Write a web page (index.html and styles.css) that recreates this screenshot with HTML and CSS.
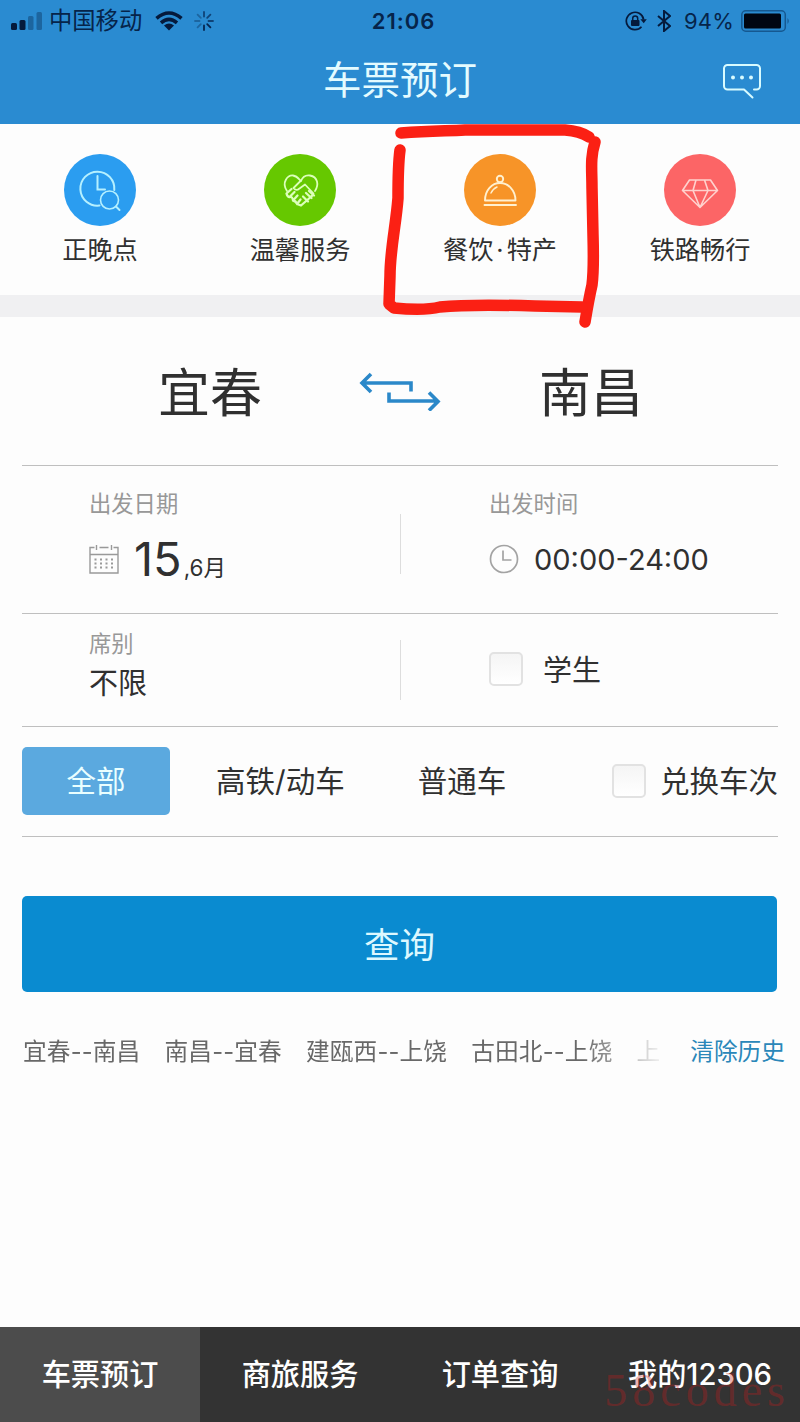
FILE: index.html
```html
<!DOCTYPE html>
<html lang="zh-CN">
<head>
    <meta charset="UTF-8">
    <meta name="viewport" content="width=device-width, initial-scale=1.0">
    <title>车票预订</title>
    <link rel="stylesheet" href="styles.css">
</head>
<body>
    <header>
        <div class="status-bar">
            <div class="status-left">
                <svg width="32" height="20" viewBox="0 0 32 20">
                    <g fill="#051a3c">
                        <rect x="0" y="12" width="6" height="7" rx="1.5"/>
                        <rect x="8.5" y="9" width="6" height="10" rx="1.5"/>
                    </g>
                    <g fill="#1c659f">
                        <rect x="17" y="5" width="5.500" height="14" rx="1.500"/>
                        <rect x="25.500" y="1" width="5.500" height="18" rx="1.500"/>
                    </g>
                </svg>
                <span class="carrier">中国移动</span>
                <svg class="wifi" width="28" height="20" viewBox="0 0 28 20">
                    <g fill="none" stroke="#051a3c" stroke-width="3.600">
                        <path d="M1.500 7.300Q14 -3.300 26.500 7.300"/>
                        <path d="M6 11.800Q14 5 22 11.800"/>
                    </g>
                    <path d="M9 14.600Q14 10.600 19 14.600L14 19.600Z" fill="#051a3c"/>
                </svg>
                <svg width="20" height="20" viewBox="0 0 20 20">
                    <g fill="none" stroke="#0f4377" stroke-width="1.800" stroke-linecap="round">
                        <path d="M10 1v4.500M16.400 3.600l-3.200 3.200M19 10h-4.500" />
                        <path d="M16.400 16.400l-3.200-3.200M10 19v-4.500" stroke="#06254f"/>
                        <path d="M3.600 16.400l3.200-3.200M1 10h4.500M3.600 3.600l3.200 3.200" stroke="#1c659f"/>
                    </g>
                </svg>
            </div>
            <div class="time">21:06</div>
            <div class="status-right">
                <svg width="22" height="20" viewBox="0 0 22 20">
                    <path d="M16.500 15.800A8.700 8.700 0 1 1 18.600 8.500" fill="none" stroke="#051a3c" stroke-width="1.700"/>
                    <path d="M15.400 8.300h6.400l-3.100 4z" fill="#051a3c"/>
                    <rect x="6" y="9" width="8.500" height="6" rx="1" fill="#051a3c"/>
                    <path d="M7.700 9.500V7.400a2.500 2.500 0 0 1 5 0v2.100" fill="none" stroke="#051a3c" stroke-width="1.500"/>
                </svg>
                <svg class="bluetooth" width="14" height="22" viewBox="0 0 14 22">
                    <path d="M1 6l12 10-6 5V1l6 5L1 16" fill="none" stroke="#051a3c" stroke-width="2"/>
                </svg>
                <span class="percent">94%</span>
                <svg width="49" height="22" viewBox="0 0 49 22">
                    <rect x=".8" y=".8" width="43.500" height="20.400" rx="4" fill="none" stroke="#155890" stroke-width="1.500"/>
                    <rect x="3" y="3.500" width="37" height="15" rx="1.500" fill="#000612"/>
                    <path d="M46.500 8q2.500 3 0 6z" fill="#155890"/>
                </svg>
            </div>
        </div>
        <div class="title-bar">
            <h1>车票预订</h1>
            <svg class="message" width="40" height="36" viewBox="0 0 40 36">
                <path d="M32 26.500h2.500a3.500 3.500 0 0 0 3.500-3.500V5.500A3.500 3.500 0 0 0 34.500 2h-29A3.500 3.500 0 0 0 2 5.500V23a3.500 3.500 0 0 0 3.500 3.500H22l8.500 8" fill="none" stroke="#d8fbff" stroke-width="2" stroke-linecap="round" stroke-linejoin="round"/>
                <g fill="#d8fbff"><circle cx="11" cy="14.500" r="2"/><circle cx="20" cy="14.500" r="2"/><circle cx="29" cy="14.500" r="2"/></g>
            </svg>
        </div>
    </header>

    <nav class="services">
        <a class="service">
            <span class="service-icon blue">
                <svg width="72" height="72" viewBox="0 0 72 72" fill="none" stroke="#b5f0ff" stroke-width="2" stroke-linecap="round">
                    <path d="M50.300 36A17 17 0 1 0 35.500 51.500M33.500 22v13.500h7.500"/>
                    <circle cx="45.500" cy="46" r="9" stroke-width="1.600"/>
                    <path d="M52 52.500l3.500 3.500"/>
                </svg>
            </span>
            <span>正晚点</span>
        </a>
        <a class="service">
            <span class="service-icon green">
                <svg width="72" height="72" viewBox="0 0 72 72" fill="none" stroke="#dcffba" stroke-width="1.800" stroke-linecap="round" stroke-linejoin="round">
                    <path d="M23 37C17 28 24 21 29 21.500C34 22 36 27 37 27C39 22 43 21 46 21.500C54 23 55 31 51 37"/>
                    <path d="M37 26.500l-7.500 7.500q2.500 3.500 6 .5l5.500-4 8.500 9-2.500 3"/>
                    <path d="M22.500 39.500l5-4.500M25.500 43l5-5M29 46.500l4.500-5M33 50l3.500-4.500M22.500 39.500q1 4 3.500 3.500t3 3.500q3 .5 4 3.500l4 1.500 12-10.500M42 39l5.500 5M39 42.500l5 5M45 37l5 4.500" stroke-width="2.300"/>
                </svg>
            </span>
            <span>温馨服务</span>
        </a>
        <a class="service">
            <span class="service-icon orange">
                <svg width="72" height="72" viewBox="0 0 72 72" fill="none" stroke="#fff0cf" stroke-width="1.900" stroke-linecap="round" stroke-linejoin="round">
                    <circle cx="36" cy="25" r="3.200"/>
                    <path d="M21 46.500C21 36 28 29 36 29S51.500 36 51.500 46.500ZM20.500 51h31.500"/>
                    <path d="M27 39q2.200-4.500 6-6" stroke-width="1.500"/>
                </svg>
            </span>
            <span>餐饮<i class="dot">·</i>特产</span>
        </a>
        <a class="service">
            <span class="service-icon red">
                <svg width="72" height="72" viewBox="0 0 72 72" fill="none" stroke="#ffd2ce" stroke-width="1.600" stroke-linejoin="round">
                    <path d="M25.500 26h21l7 10.500L36 53.500 18.500 36.500ZM18.500 36.500h35M32 26l-3 10.500L36 53.500l8-17L40.500 26"/>
                </svg>
            </span>
            <span>铁路畅行</span>
        </a>
        <!-- red pen mark around the catering entry -->
        <svg class="pen-mark" width="230" height="220" viewBox="375 115 230 220" fill="none" stroke="#fb2014" stroke-width="11.500" stroke-linecap="round" stroke-linejoin="round">
            <path d="M401 133C430 131 445 131 465 130H565Q580 131 589 137"/>
            <path d="M595 142C590 158 592 170 592 188L593 235Q594 270 592 285Q589 298 585 322"/>
            <path d="M400 150C398 165 398 180 398 198C396 225 390 250 390 276L389 304L394 308Q424 311 440 307Q470 304 535 306L582 307"/>
        </svg>
    </nav>

    <main>
        <section class="stations">
            <span>宜春</span>
            <svg width="82" height="40" viewBox="0 0 82 40" fill="none" stroke="#2b88c9" stroke-width="3.600">
                <path d="M52 20.500v-8.500H3M12 3L3 12l9 9"/>
                <path d="M30 21.500v8.500h49M70 21.500l9 9-9 9"/>
            </svg>
            <span>南昌</span>
        </section>

        <section class="row row-date">
            <div class="cell">
                <p class="label">出发日期</p>
                <div class="value">
                    <svg width="30" height="30" viewBox="0 0 30 30" fill="none" stroke="#999" stroke-width="1.400">
                        <path d="M5.500 3.500H1V29h28V3.500h-4.500M10.500 3.500h9M1 10.500h28"/>
                        <path d="M7.500 1v5M22.500 1v5"/>
                        <path d="M5.500 15.500h19M5.500 19.500h19M5.500 23.500h19" stroke-dasharray="2 3.500" stroke-width="2"/>
                    </svg>
                    <span class="date"><b>15</b>,6月</span>
                </div>
            </div>
            <div class="cell">
                <p class="label">出发时间</p>
                <div class="value">
                    <svg width="30" height="30" viewBox="0 0 30 30" fill="none" stroke="#a3a3a3" stroke-width="1.700">
                        <circle cx="15" cy="15" r="13.500"/>
                        <path d="M14 6.500V16h8.500"/>
                    </svg>
                    <span class="hours">00:00-24:00</span>
                </div>
            </div>
        </section>

        <section class="row row-seat">
            <div class="cell">
                <p class="label">席别</p>
                <p class="seat">不限</p>
            </div>
            <label class="cell check">
                <input type="checkbox">
                <span>学生</span>
            </label>
        </section>

        <section class="row row-type">
            <button class="type active">全部</button>
            <span class="type fast">高铁/动车</span>
            <span class="type">普通车</span>
            <label class="check exchange">
                <input type="checkbox">
                <span>兑换车次</span>
            </label>
        </section>

        <button class="search">查询</button>

        <section class="history">
            <div class="history-list">
                <span>宜春--南昌</span>
                <span>南昌--宜春</span>
                <span>建瓯西--上饶</span>
                <span>古田北--上饶</span>
                <span>上</span>
            </div>
            <a class="clear">清除历史</a>
        </section>
    </main>

    <footer class="tabs">
        <a class="tab active">车票预订</a>
        <a class="tab">商旅服务</a>
        <a class="tab">订单查询</a>
        <a class="tab">我的12306</a>
        <span class="watermark">58codes</span>
    </footer>
</body>
</html>
```
FILE: styles.css
```css
* {
    box-sizing: border-box;
    margin: 0;
    padding: 0;
}

body {
    width: 800px;
    height: 1422px;
    display: flex;
    flex-direction: column;
    overflow: hidden;
    background: #fdfdfd;
    color: #303030;
    font-family: Inter, "Noto Sans CJK SC", sans-serif;
}

svg {
    display: block;
    flex-shrink: 0;
}

header {
    height: 124px;
    background: #2a8bd1;
}

.status-bar {
    height: 40px;
    padding: 0 10px 0 11px;
    display: grid;
    grid-template-columns: 1fr auto 1fr;
    align-items: center;
    color: #06244a;
    font-size: 22px;
    line-height: 40px;
}

.status-left, .status-right {
    display: flex;
    align-items: center;
}

.status-right {
    justify-content: flex-end;
}

.carrier {
    margin-left: 6px;
    font-size: 23.300px;
    line-height: 42px;
}

.wifi {
    margin: 0 11px 0 13px;
}

.time {
    padding-left: 6px;
    font-weight: 600;
    letter-spacing: 1px;
}

.bluetooth {
    margin: 0 13px 0 10px;
}

.percent {
    margin-right: 7px;
    letter-spacing: .2px;
}

.title-bar {
    height: 80px;
    display: flex;
    align-items: center;
    justify-content: center;
    position: relative;
    color: #e4fbff;
}

.title-bar h1 {
    font-size: 38.500px;
    font-weight: 400;
    line-height: 80px;
}

.message {
    position: absolute;
    right: 38px;
    top: 23px;
}

.services {
    position: relative;
    height: 193px;
    padding-top: 30px;
    display: grid;
    grid-template-columns: repeat(4, 1fr);
    border-bottom: 22px solid #f0f0f2;
}

.service {
    display: flex;
    flex-direction: column;
    align-items: center;
    gap: 6px;
    font-size: 25.200px;
    line-height: 36px;
}

.service-icon {
    width: 72px;
    height: 72px;
    border-radius: 50%;
}

.dot {
    padding: 0 3px;
    font-style: normal;
}

.blue { background: #2b9df0; }
.green { background: #66c800; }
.orange { background: #f79428; }
.red { background: #fc6566; }

.pen-mark {
    position: absolute;
    left: 375px;
    top: -9px;
}

main {
    flex: 1;
    padding: 0 22px;
}

.stations {
    height: 149px;
    display: flex;
    align-items: center;
    justify-content: center;
    gap: 98px;
    border-bottom: 1px solid #bfbfbf;
    font-size: 52px;
    line-height: 148px;
}

.stations span {
    padding-top: 6px;
    margin-right: -1px;
}

.row {
    display: flex;
    border-bottom: 1px solid #bfbfbf;
}

.cell {
    width: 50%;
    padding-left: 67px;
}

.row .cell + .cell {
    padding-left: 89px;
}

.row-date, .row-seat {
    background: linear-gradient(#ddd, #ddd) center / 1px 60px no-repeat;
}

.label {
    color: #989898;
    font-size: 22.300px;
    line-height: 30px;
}

.row-date {
    height: 148px;
    padding-top: 23px;
    background-position: center 48px;
}

.value {
    height: 60px;
    margin-top: 10px;
    display: flex;
    align-items: center;
    gap: 15px;
}

.date {
    padding-top: 8px;
    font-size: 22.500px;
    line-height: 60px;
}

.date b {
    margin-right: 2px;
    font-size: 47px;
    font-weight: 400;
}

.hours {
    font-size: 29px;
}

.row-seat {
    height: 113px;
    padding-top: 15px;
    background-position: center 26px;
}

.seat {
    margin-top: 7px;
    font-size: 29px;
    line-height: 36px;
}

.check {
    display: flex;
    align-items: center;
    font-size: 29px;
}

.row-seat .check {
    height: 80px;
    gap: 20px;
}

.check span {
    margin-top: -3px;
}

.check input {
    appearance: none;
    width: 34px;
    height: 34px;
    border: 2px solid #e2e2e2;
    border-radius: 5px;
    background: linear-gradient(#f5f5f5, #fff);
}

.row-type {
    height: 110px;
    padding-bottom: 2px;
    align-items: center;
    font-size: 29.500px;
}

.type.active {
    width: 148px;
    height: 68px;
    padding-bottom: 4px;
    border: none;
    border-radius: 5px;
    background: #5ba9df;
    color: #eaffff;
    font: inherit;
}

.fast {
    margin: 0 73px 0 46px;
}

.type:not(.active) {
    padding-bottom: 3px;
}

.exchange {
    margin-left: auto;
    gap: 14px;
    font-size: 29.500px;
}

.search {
    display: block;
    width: 755px;
    height: 96px;
    margin-top: 59px;
    padding-bottom: 4px;
    border: none;
    border-radius: 5px;
    background: #0a8bd0;
    color: #dcf8ff;
    font: 35.500px "Noto Sans CJK SC", sans-serif;
}

.history {
    margin: 40px -7px 0 1px;
    display: flex;
    justify-content: space-between;
    font-size: 23.700px;
    line-height: 40px;
}

.history-list {
    width: 640px;
    display: flex;
    gap: 24px;
    overflow: hidden;
    white-space: nowrap;
    color: #686868;
    letter-spacing: .15px;
    -webkit-mask-image: linear-gradient(to right, #000 560px, transparent 645px);
    mask-image: linear-gradient(to right, #000 560px, transparent 645px);
}

.clear {
    color: #2a87b9;
    white-space: nowrap;
}

.tabs {
    position: relative;
    height: 95px;
    display: grid;
    grid-template-columns: repeat(4, 1fr);
    background: #333;
    color: #fff;
    font-size: 29.200px;
    font-weight: 500;
    line-height: 95px;
    text-align: center;
}

.tab.active {
    background: #4c4c4c;
}

.watermark {
    position: absolute;
    right: 10px;
    bottom: 8px;
    color: rgba(190, 30, 30, .35);
    font: 46px/46px "Liberation Serif", serif;
    letter-spacing: 5px;
}
```
